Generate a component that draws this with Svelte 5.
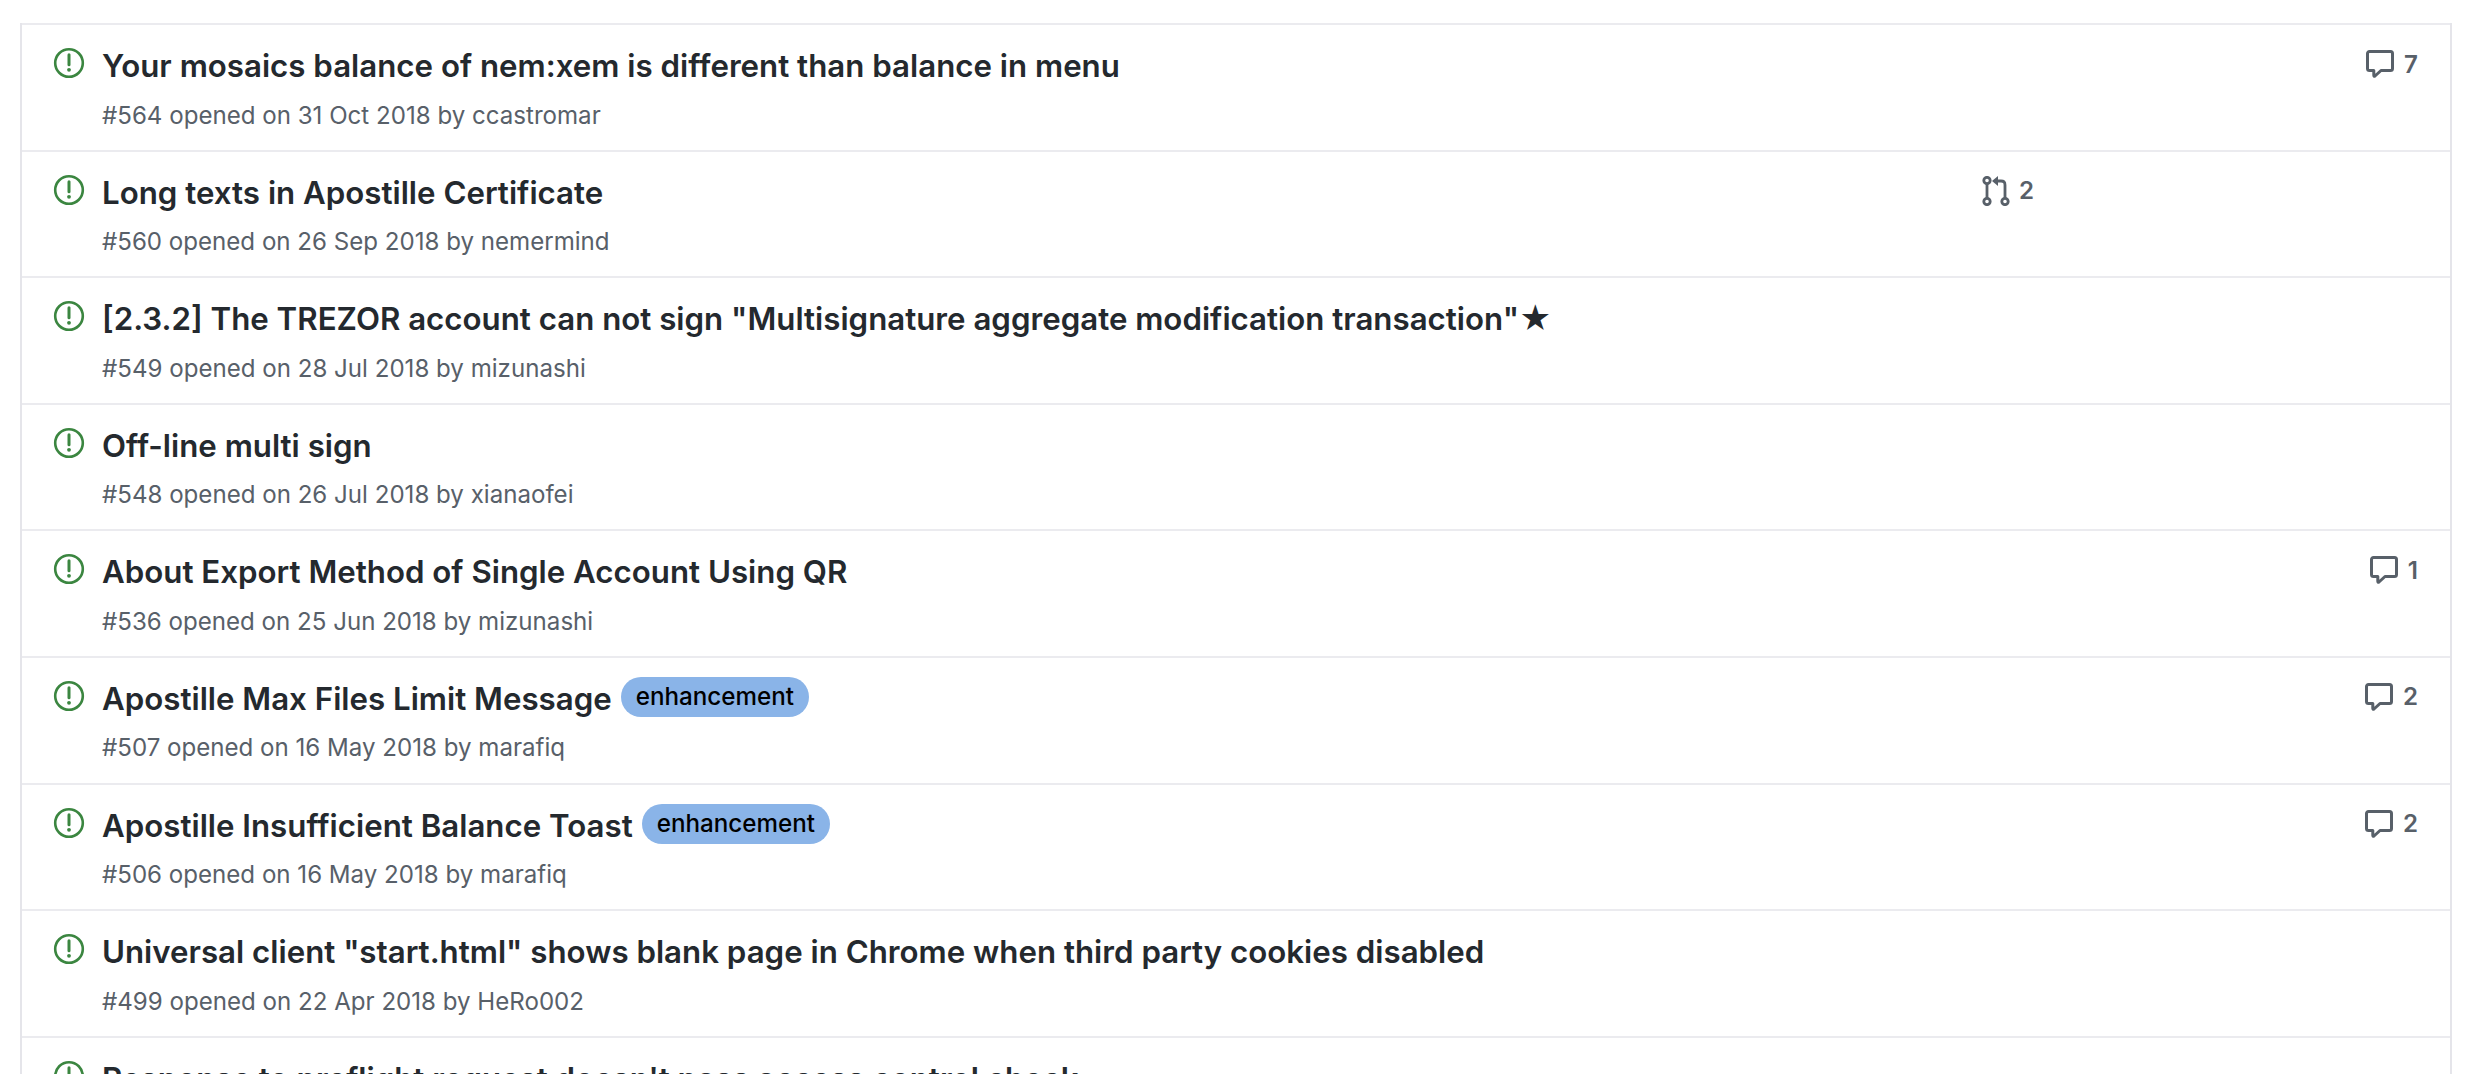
<script>
  const issues = [
    { title: "Your mosaics balance of nem:xem is different than balance in menu", meta: "#564 opened on 31 Oct 2018 by ccastromar", comments: 7 },
    { title: "Long texts in Apostille Certificate", meta: "#560 opened on 26 Sep 2018 by nemermind", prs: 2 },
    { title: '[2.3.2] The TREZOR account can not sign "Multisignature aggregate modification transaction"★', meta: "#549 opened on 28 Jul 2018 by mizunashi" },
    { title: "Off-line multi sign", meta: "#548 opened on 26 Jul 2018 by xianaofei" },
    { title: "About Export Method of Single Account Using QR", meta: "#536 opened on 25 Jun 2018 by mizunashi", comments: 1 },
    { title: "Apostille Max Files Limit Message", label: "enhancement", meta: "#507 opened on 16 May 2018 by marafiq", comments: 2 },
    { title: "Apostille Insufficient Balance Toast", label: "enhancement", meta: "#506 opened on 16 May 2018 by marafiq", comments: 2 },
    { title: 'Universal client "start.html" shows blank page in Chrome when third party cookies disabled', meta: "#499 opened on 22 Apr 2018 by HeRo002" },
    { title: "Response to preflight request doesn't pass access control check", meta: "" }
  ];
</script>

<div class="page">
  <div class="box">
    {#each issues as issue}
      <div class="row">
        <svg class="state" viewBox="0 0 16 16">
          <circle cx="8" cy="8" r="6.9" fill="none" stroke="#3b8640" stroke-width="1.3" />
          <path d="M8 3.9v5" stroke="#3b8640" stroke-width="1.5" stroke-linecap="round" />
          <circle cx="8" cy="11.4" r="0.95" fill="#3b8640" />
        </svg>
        <div class="main">
          <div class="title">
            <span>{issue.title}</span>
            {#if issue.label}<span class="label">{issue.label}</span>{/if}
          </div>
          <div class="meta">{issue.meta}</div>
        </div>
        <div class="prs">
          {#if issue.prs}
            <svg viewBox="0 0 28 30" class="pr-icon">
              <g fill="none" stroke="#586069" stroke-width="2.8">
                <circle cx="5" cy="4.5" r="3.2" />
                <circle cx="5" cy="25.5" r="3.2" />
                <circle cx="23" cy="25.5" r="3.2" />
                <path d="M5 8v14" />
                <path d="M23 22v-13q0-4-4-4h-5" />
              </g>
              <path d="M10 5l6-5v10z" fill="#586069" />
            </svg>
            <span>{issue.prs}</span>
          {/if}
        </div>
        <div class="comments">
          {#if issue.comments}
            <svg viewBox="0 0 28 28" class="comment-icon">
              <path d="M3.5 1.5h21a2 2 0 0 1 2 2v15a2 2 0 0 1-2 2h-9.500l-6 5.500q-1.200.8-1.200-.8v-4.700h-4.300a2 2 0 0 1-2-2v-15a2 2 0 0 1 2-2z" fill="none" stroke="#586069" stroke-width="3" stroke-linejoin="round" />
            </svg>
            <span>{issue.comments}</span>
          {/if}
        </div>
      </div>
    {/each}
  </div>
</div>

<style>
  :global(body) {
    margin: 0;
    background: #fff;
  }

  .page {
    height: 100vh;
    overflow: hidden;
    padding: 23px 14px 0 20px;
    box-sizing: border-box;
    font-family: Inter, "Liberation Sans", sans-serif;
  }

  .box {
    border-left: 2px solid #e5e5ea;
    border-right: 2px solid #e5e5ea;
  }

  .row {
    display: flex;
    align-items: flex-start;
    height: 126.6px;
    box-sizing: border-box;
    border-top: 2px solid #ebebef;
    padding: 22px 32px 0 31px;
  }

  .state {
    width: 32px;
    height: 32px;
    flex: none;
  }

  .main {
    flex: 1;
    margin-left: 17px;
    min-width: 0;
  }

  .title {
    display: flex;
    align-items: center;
    gap: 9px;
    height: 38px;
    font-size: 31.25px;
    font-weight: 600;
    color: #24292e;
    white-space: nowrap;
  }

  .label {
    font-size: 24.2px;
    font-weight: 500;
    line-height: 40px;
    padding: 0 15px;
    margin-top: -3px;
    border-radius: 20px;
    background: #8ab4e8;
    color: #000;
  }

  .meta {
    margin-top: 15.5px;
    font-size: 24.1px;
    color: #586069;
    white-space: nowrap;
  }

  .prs,
  .comments {
    display: flex;
    align-items: center;
    justify-content: flex-end;
    gap: 10px;
    height: 34px;
    font-size: 24.1px;
    font-weight: 600;
    color: #586069;
  }

  .prs {
    gap: 9px;
    width: 100px;
    margin-right: 324px;
  }

  .comments {
    width: 60px;
  }

  .pr-icon {
    width: 28px;
    height: 30px;
    flex: none;
  }

  .comment-icon {
    width: 28px;
    height: 28px;
    flex: none;
  }
</style>
